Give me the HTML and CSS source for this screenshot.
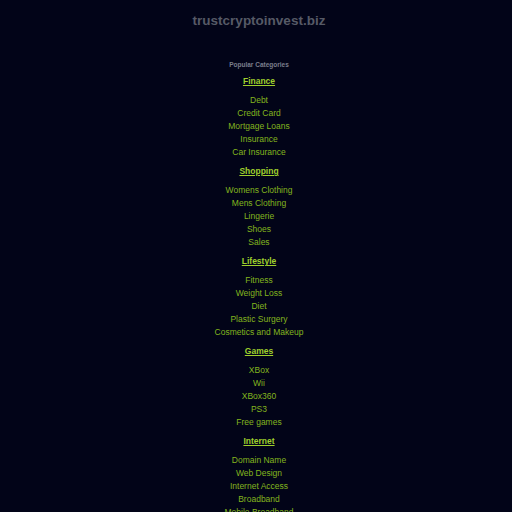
FILE: index.html
```html
<!DOCTYPE html>
<html>
<head>
<meta charset="utf-8">
<title>trustcryptoinvest.biz</title>
<link rel="stylesheet" href="styles.css">
</head>
<body>
<div class="page">
  <h1 class="title">trustcryptoinvest.biz</h1>
  <div class="cats">
    <div class="popular">Popular Categories</div>
    <div class="group">
      <a class="head" href="#">Finance</a>
      <ul>
        <li><a href="#">Debt</a></li>
        <li><a href="#">Credit Card</a></li>
        <li><a href="#">Mortgage Loans</a></li>
        <li><a href="#">Insurance</a></li>
        <li><a href="#">Car Insurance</a></li>
      </ul>
    </div>
    <div class="group">
      <a class="head" href="#">Shopping</a>
      <ul>
        <li><a href="#">Womens Clothing</a></li>
        <li><a href="#">Mens Clothing</a></li>
        <li><a href="#">Lingerie</a></li>
        <li><a href="#">Shoes</a></li>
        <li><a href="#">Sales</a></li>
      </ul>
    </div>
    <div class="group">
      <a class="head" href="#">Lifestyle</a>
      <ul>
        <li><a href="#">Fitness</a></li>
        <li><a href="#">Weight Loss</a></li>
        <li><a href="#">Diet</a></li>
        <li><a href="#">Plastic Surgery</a></li>
        <li><a href="#">Cosmetics and Makeup</a></li>
      </ul>
    </div>
    <div class="group">
      <a class="head" href="#">Games</a>
      <ul>
        <li><a href="#">XBox</a></li>
        <li><a href="#">Wii</a></li>
        <li><a href="#">XBox360</a></li>
        <li><a href="#">PS3</a></li>
        <li><a href="#">Free games</a></li>
      </ul>
    </div>
    <div class="group">
      <a class="head" href="#">Internet</a>
      <ul>
        <li><a href="#">Domain Name</a></li>
        <li><a href="#">Web Design</a></li>
        <li><a href="#">Internet Access</a></li>
        <li><a href="#">Broadband</a></li>
        <li><a href="#">Mobile Broadband</a></li>
      </ul>
    </div>
  </div>
</div>
</body>
</html>
```
FILE: styles.css
```css
html, body {
  margin: 0;
  padding: 0;
  background: #020418;
}
body {
  font-family: "Liberation Sans", Arial, sans-serif;
}
.page {
  padding-left: 6px;
  text-align: center;
}
.title {
  margin: 0;
  padding-top: 12px;
  font-size: 13.5px;
  line-height: 17px;
  font-weight: bold;
  color: #565a66;
}
.cats {
  padding-top: 31px;
}
.popular {
  font-size: 6.5px;
  line-height: 9px;
  font-weight: bold;
  color: #7a7e8c;
}
.group {
  display: flex;
  flex-direction: column;
  align-items: center;
}
.head {
  margin-top: 7px;
  font-size: 8.5px;
  line-height: 11px;
  font-weight: bold;
  color: #9fd02c;
  text-decoration: underline;
}
.group ul {
  list-style: none;
  margin: 7px 0 0 0;
  padding: 0;
}
.group li {
  font-size: 8.5px;
  line-height: 13px;
}
.group li a {
  color: #82b51e;
  text-decoration: none;
}
```
